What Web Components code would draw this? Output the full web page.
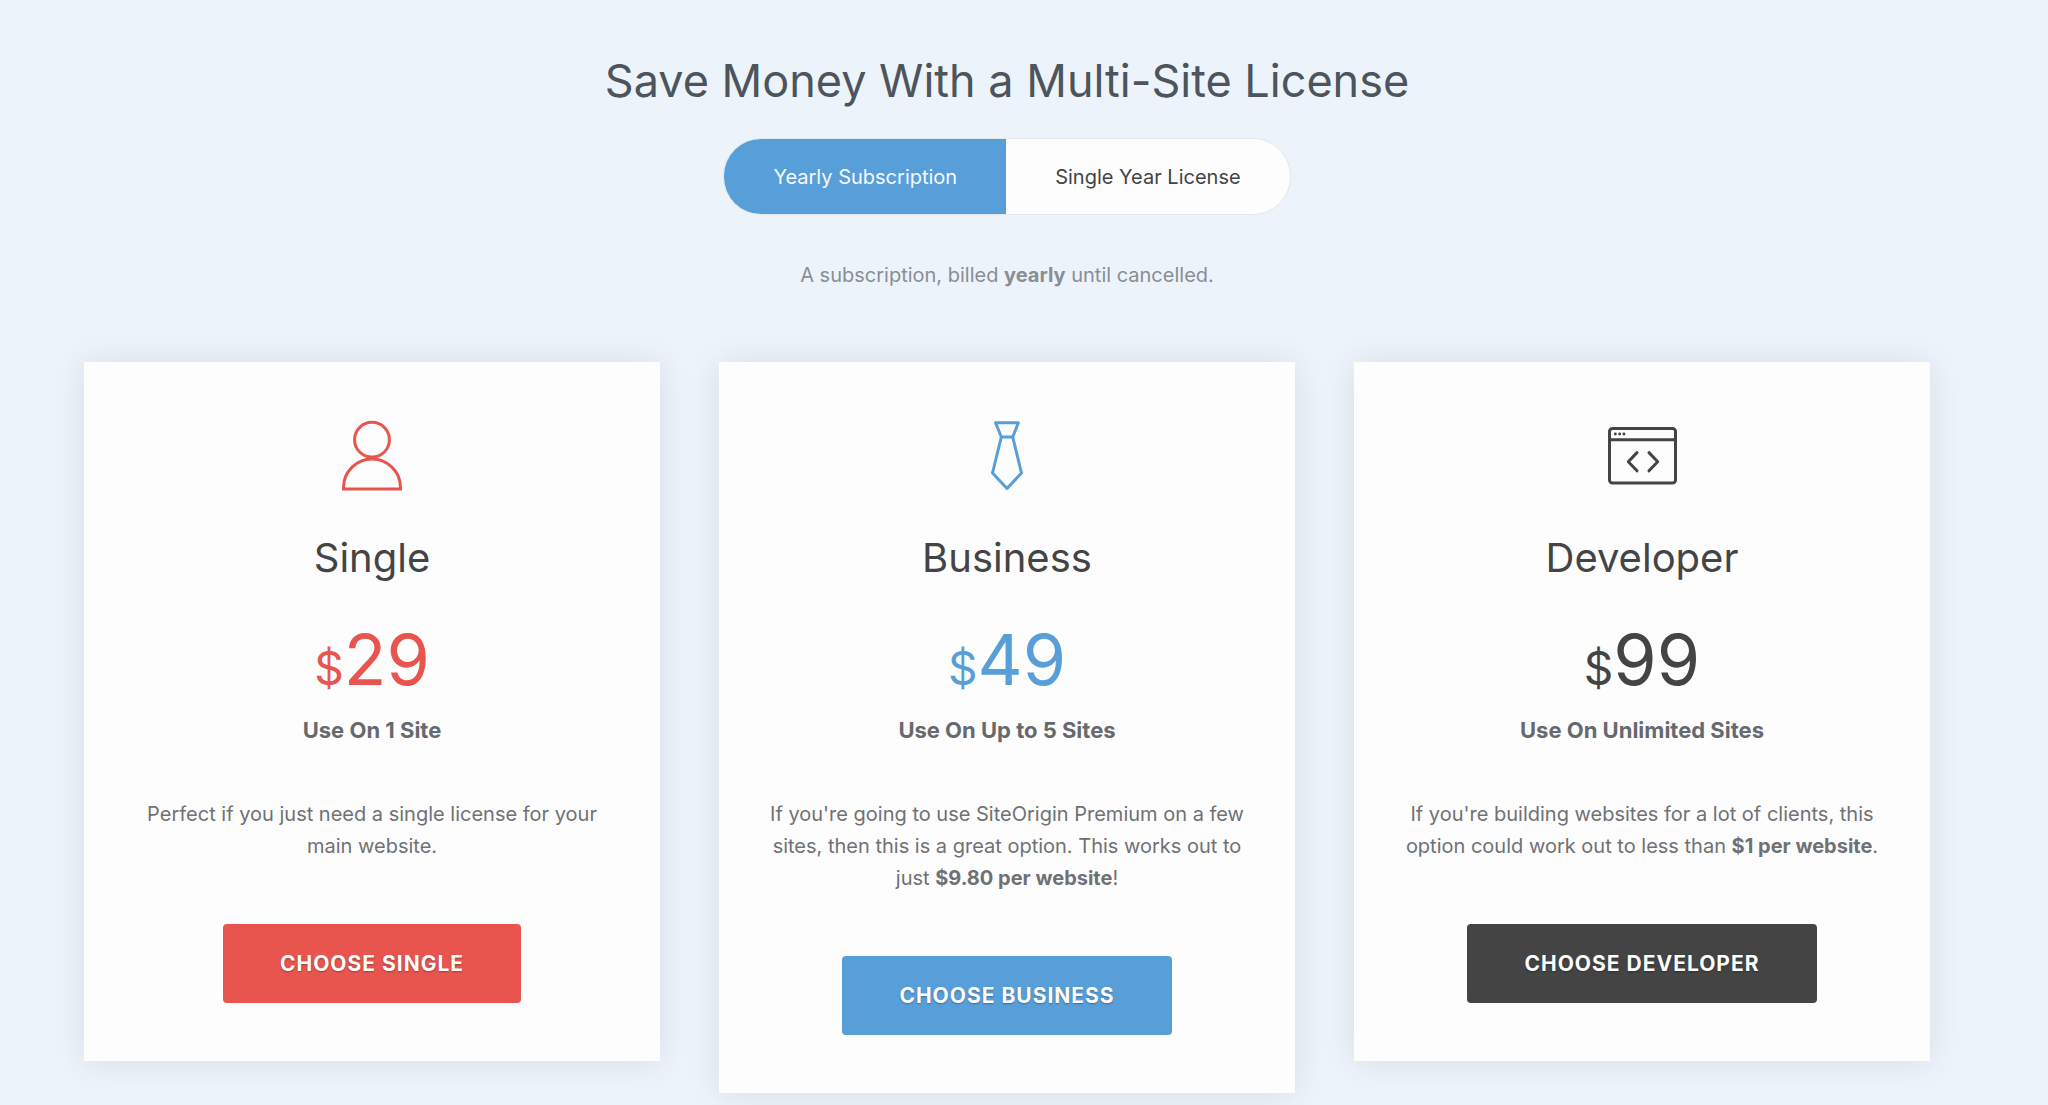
<!DOCTYPE html>
<html lang="en">
<head>
<meta charset="utf-8">
<meta name="viewport" content="width=device-width, initial-scale=1">
<title>Save Money With a Multi-Site License</title>
<style>
  body {
    margin: 0;
    min-height: 100vh;
    background: #ecf3fa;
    color: #6f7174;
    font: 400 20px/32px Inter, "Liberation Sans", sans-serif;
  }
  b { font-weight: 700; }
</style>
</head>
<body>

<pricing-page>
  <span slot="title">Save Money With a Multi-Site License</span>
  <billing-toggle slot="toggle"></billing-toggle>
  <span slot="note">A subscription, billed <b>yearly</b> until cancelled.</span>

  <plan-card name="Single" price="29" sites="Use On 1 Site" icon="person" style="--accent: #e8554e">
    Perfect if you just need a single license for your main website.
  </plan-card>
  <plan-card name="Business" price="49" sites="Use On Up to 5 Sites" icon="tie" style="--accent: #589fd9">
    If you're going to use SiteOrigin Premium on a few sites, then this is a great option. This works out to just <b>$9.80 per website</b>!
  </plan-card>
  <plan-card name="Developer" price="99" sites="Use On Unlimited Sites" icon="window" style="--accent: #444444">
    If you're building websites for a lot of clients, this option could work out to less than <b>$1 per website</b>.
  </plan-card>
</pricing-page>

<template id="pricing-page">
  <style>
    :host { display: block; padding: 49px 118px 12px 84px; }
    header { display: flex; flex-direction: column; align-items: center; text-align: center; }
    h1 { margin: 0 0 25px; font-size: 45px; line-height: 64px; font-weight: 400; color: #4d545b; }
    p { margin: 44px 0 0; color: #898e93; }
    main { display: grid; grid-template-columns: repeat(3, minmax(0, 1fr)); gap: 59px; align-items: start; margin-top: 71px; }
  </style>
  <header>
    <h1><slot name="title"></slot></h1>
    <slot name="toggle"></slot>
    <p><slot name="note"></slot></p>
  </header>
  <main><slot></slot></main>
</template>

<template id="billing-toggle">
  <style>
    :host { display: inline-flex; border: 1px solid #e1e6ea; border-radius: 38px; overflow: hidden; background: #fdfdfd; }
    button {
      border: 0; padding: 22px 49px 21px; background: none; color: #444;
      font: inherit; cursor: pointer;
    }
    button[aria-pressed="true"] { background: #589fd9; color: #f4faff; }
  </style>
  <button type="button" aria-pressed="true">Yearly Subscription</button>
  <button type="button" aria-pressed="false">Single Year License</button>
</template>

<template id="plan-card">
  <style>
    :host {
      display: flex; flex-direction: column; align-items: center;
      padding: 58px 48px; background: #fdfdfd; text-align: center;
      box-shadow: 0 1px 32px rgba(0, 0, 0, .09);
    }
    svg { display: block; width: 72px; height: 72px; fill: none; stroke: var(--accent); stroke-width: 3; }
    h2 { margin: 40px 0 36px; font-size: 40px; line-height: 52px; font-weight: 400; color: #444; }
    .price { font-size: 70px; line-height: 80px; color: var(--accent); }
    .price small { font-size: 46px; line-height: 46px; }
    .sites { margin: 14px 0 52px; font-size: 22px; font-weight: 700; color: #66696e; }
    p { margin: 0 0 62px; }
    button {
      border: 0; border-radius: 4px; padding: 24px 57px 23px;
      background: var(--accent); color: #fdfdfd;
      font: inherit; font-size: 21px; font-weight: 700; letter-spacing: 1px; text-transform: uppercase;
      text-shadow: 0 1px 2px rgba(0, 0, 0, .3); cursor: pointer;
    }
  </style>
  <svg viewBox="0 0 72 72" aria-hidden="true"></svg>
  <h2></h2>
  <div class="price"><small>$</small><span></span></div>
  <div class="sites"></div>
  <p><slot></slot></p>
  <button type="button"></button>
</template>

<script>
  const stamp = (host, id) => {
    const root = host.attachShadow({ mode: 'open' });
    root.append(document.getElementById(id).content.cloneNode(true));
    return root;
  };

  const ICONS = {
    person: '<circle cx="36" cy="19.7" r="17.4"/><path d="M7.5 69V67.5A28.5 28.5 0 0 1 64.5 67.5V69Z"/>',
    tie: '<path d="M24.6 2.7H47.4L41.7 17H30.3ZM30.3 17L21.5 53L36 68.5L50.5 53L41.7 17" stroke-linejoin="round"/>',
    window: '<rect x="3.5" y="8.5" width="66" height="54.5" rx="3"/><path d="M3.5 19.7H69.5"/>' +
      '<path d="M31 32.6L22.3 41.7L31 50.8M43 32.6L51.7 41.7L43 50.8" stroke-linecap="round" stroke-linejoin="round"/>' +
      '<path d="M9.3 14h.1M13.6 14h.1M17.9 14h.1" stroke-width="2.8" stroke-linecap="round"/>'
  };

  customElements.define('pricing-page', class extends HTMLElement {
    constructor() { super(); stamp(this, 'pricing-page'); }
  });

  customElements.define('billing-toggle', class extends HTMLElement {
    constructor() {
      super();
      const buttons = stamp(this, 'billing-toggle').querySelectorAll('button');
      buttons.forEach(b => b.addEventListener('click', () =>
        buttons.forEach(o => o.setAttribute('aria-pressed', o === b))));
    }
  });

  customElements.define('plan-card', class extends HTMLElement {
    connectedCallback() {
      if (this.shadowRoot) return;
      const root = stamp(this, 'plan-card');
      const name = this.getAttribute('name');
      root.querySelector('svg').innerHTML = ICONS[this.getAttribute('icon')];
      root.querySelector('h2').textContent = name;
      root.querySelector('.price span').textContent = this.getAttribute('price');
      root.querySelector('.sites').textContent = this.getAttribute('sites');
      root.querySelector('button').textContent = 'Choose ' + name;
    }
  });
</script>
</body>
</html>
